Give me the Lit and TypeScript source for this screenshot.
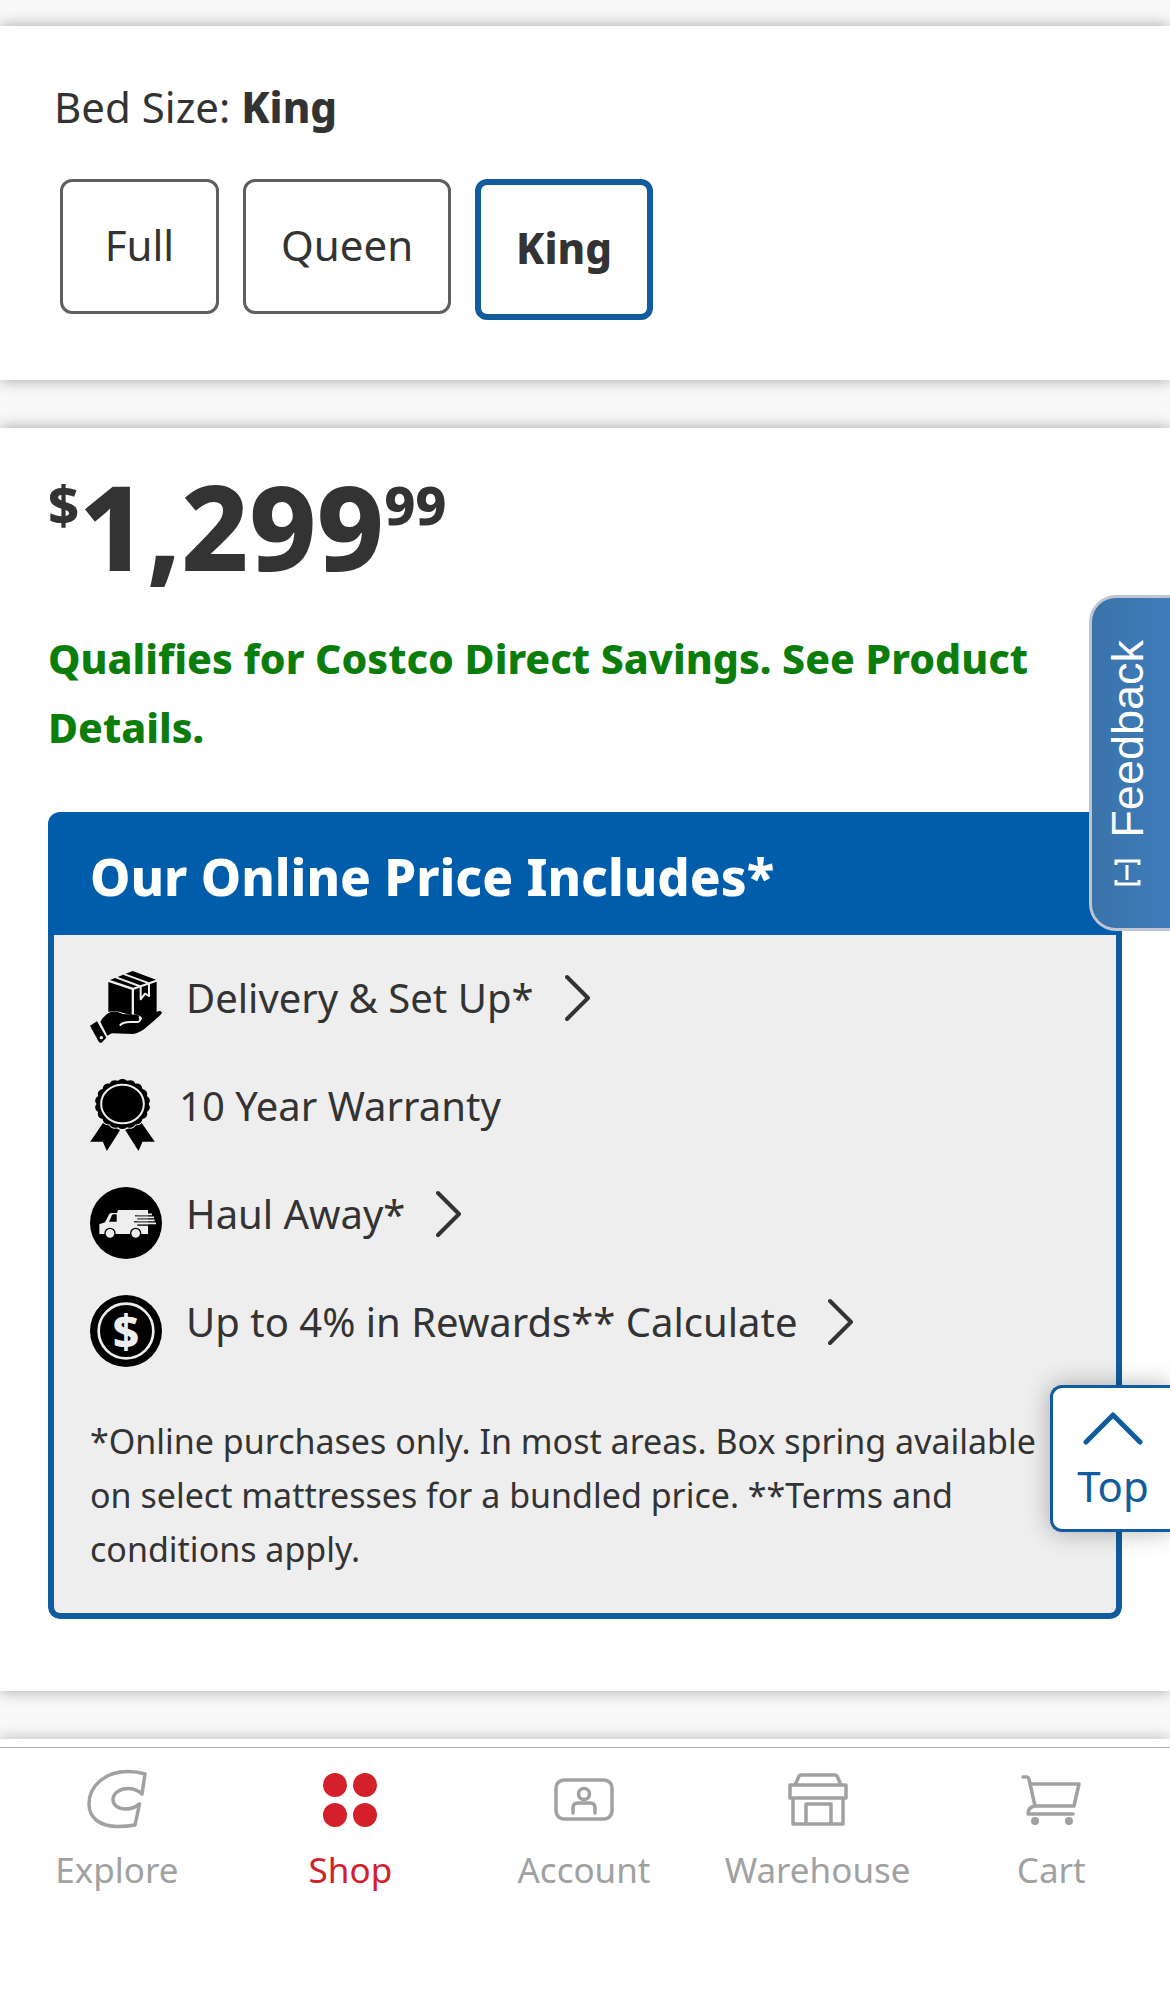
import { LitElement, html, svg, css } from "lit";
import { customElement, state } from "lit/decorators.js";
import { classMap } from "lit/directives/class-map.js";

const sizes = ["Full", "Queen", "King"];

/** Scalloped edge of the warranty rosette. */
function rosette(cx: number, cy: number, rx: number, ry: number, teeth: number): string {
  const at = (k: number, s: number) => {
    const a = (Math.PI * 2 * k) / teeth - Math.PI / 2;
    return `${(cx + Math.cos(a) * rx * s).toFixed(1)} ${(cy + Math.sin(a) * ry * s).toFixed(1)}`;
  };
  let d = `M${at(-0.5, 0.94)}`;
  for (let i = 0; i < teeth; i++) d += `Q${at(i, 1.08)} ${at(i + 0.5, 0.94)}`;
  return d + "Z";
}

const deliveryIcon = html`<svg class="perk-icon" viewBox="0 0 216 216" aria-hidden="true">
  <path d="M60 27 130 50 198 26 128 0Z M55 33 125 56V132L100 126Q84 118 55 122Z M132 56 200 32V124L158 146Q154 132 132 130Z" />
  <path class="cut" d="M78 19 148 45M104 10 172 35M152 47V85L165 68 177 75V39" />
  <path d="M31 152Q46 128 62 123Q80 118 98 129L138 131Q150 133 150 144V148L204 121Q214 118 216 125Q214 131 176 163Q152 186 130 189L66 187 52 194Z" />
  <path class="cut" d="M91 162Q100 153 120 153H143Q154 150 149 139" />
  <path d="M0 164 21 151 49 200 34 216 27 214Z" />
  <circle class="hole" cx="34" cy="200" r="5" />
</svg>`;

const warrantyIcon = html`<svg class="perk-icon slim" viewBox="0 0 194 216" aria-hidden="true">
  <path d="M40 130 90 153 50 216 38 188H0Z M153 130 105 153 145 216 157 188H194Z" />
  <path class="halo" d=${rosette(97, 75, 83, 75, 18)} />
  <ellipse class="ring thin" cx="97" cy="75" rx="64" ry="58" />
</svg>`;

const haulIcon = html`<svg class="perk-icon" viewBox="0 0 216 216" aria-hidden="true">
  <circle cx="108" cy="108" r="108" />
  <path class="light" d="M28 141V112L45 106 58 81Q60 78 66 78H81L84 69H174V141Z" />
  <path d="M57 104 66 84Q67 82 71 82H80V104Z" />
  <path class="gap" d="M135 87H184M142 96H190M132 105H192M142 114H196" />
  <path class="streak" d="M140 82H186M134 91H192M142 100H194M130 109H198" />
  <circle class="wheel" cx="60" cy="139" r="15" /><circle class="wheel" cx="137" cy="139" r="15" />
</svg>`;

const rewardIcon = html`<svg class="perk-icon" viewBox="0 0 216 216" aria-hidden="true">
  <circle cx="108" cy="108" r="108" />
  <circle class="ring" cx="108" cy="108" r="82" />
  <text class="coin" x="108" y="158" text-anchor="middle">$</text>
</svg>`;

const perks = [
  { label: "Delivery & Set Up*", icon: deliveryIcon, link: true },
  { label: "10 Year Warranty", icon: warrantyIcon, link: false },
  { label: "Haul Away*", icon: haulIcon, link: true },
  { label: "Up to 4% in Rewards** Calculate", icon: rewardIcon, link: true },
];

const tabs = [
  {
    label: "Explore",
    icon: svg`<path d="M58 5C52 3 46 2.500 41 2.500C18 2.500 2 17 2 35C2 49 13 57.500 31 57.500C38 57.500 43 57 48 56L52.500 35C48 38.500 44 40 39 40C31 40 26 36 26 30.500C26 24 33 19.500 41 19.500C47 19.500 51 21.500 55 25Z"/>`,
  },
  {
    label: "Shop",
    icon: svg`<g class="dots"><circle cx="15" cy="16" r="12"/><circle cx="45" cy="16" r="12"/><circle cx="15" cy="46" r="12"/><circle cx="45" cy="46" r="12"/></g>`,
  },
  {
    label: "Account",
    icon: svg`<rect x="2" y="11" width="56" height="39" rx="8"/><circle cx="30" cy="25" r="5.500"/><path d="M19 44V39Q19 34 24 34H36Q41 34 41 39V44"/>`,
  },
  {
    label: "Warehouse",
    icon: svg`<path d="M7 16 11 7Q12 6 13 6H47Q48 6 49 7L53 16M2 16H58V29H2ZM5 29V55H55V29M18 55V35H43V55"/>`,
  },
  {
    label: "Cart",
    icon: svg`<path d="M2 8H6Q7 8 8 10L14 37H53L58 15H9M14 37Q7 38 7 45H52"/><g class="dots"><circle cx="14" cy="52" r="4"/><circle cx="48" cy="52" r="4"/></g>`,
  },
];

@customElement("app-root")
export class AppRoot extends LitElement {
  @state() private size = "King";
  @state() private tab = "Shop";

  static styles = css`
    :host {
      display: block;
      font-family: "Noto Sans", "Open Sans", sans-serif;
      color: #333;
    }
    * { box-sizing: border-box; }
    button { font: inherit; color: inherit; background: none; cursor: pointer; }
    a { color: inherit; text-decoration: none; }
    h1, h2, p, ul { margin: 0; padding: 0; }
    .page {
      position: relative;
      display: flex;
      flex-direction: column;
      gap: 48px;
      min-height: 100vh;
      padding-top: 26px;
      overflow: hidden;
      background: #f9f9f9;
    }
    .panel {
      background: #fff;
      box-shadow: 0 0 15px rgba(0, 0, 0, 0.35);
    }
    .sizes { padding: 49px 54px 60px; }
    .size-label { font-size: 42px; line-height: 63px; }
    .size-label strong { font-weight: 800; }
    .options {
      display: flex;
      align-items: flex-start;
      gap: 24px;
      margin-top: 41px;
      padding-left: 6px;
    }
    .option {
      min-width: 159px;
      padding: 31px 35px 35px;
      border: 3px solid #5f5f5f;
      border-radius: 12px;
      font-size: 42px;
      line-height: 63px;
    }
    .option.chosen {
      border: 6px solid #115c9f;
      font-weight: 800;
    }
    .offer { padding: 38px 48px 72px; }
    .price {
      display: flex;
      align-items: flex-start;
      font-size: 117px;
      line-height: 120px;
      font-weight: 800;
    }
    .small {
      margin-top: 11px;
      font-size: 54px;
      line-height: 54px;
    }
    .savings {
      margin-top: 38px;
      font-size: 41px;
      line-height: 69px;
      font-weight: 800;
      color: #0b7d0b;
    }
    .includes {
      margin-top: 50px;
      border-radius: 12px;
      overflow: hidden;
    }
    .includes-title {
      padding: 28px 42px 23px;
      background: #005dab;
      color: #fff;
      font-size: 51px;
      line-height: 72px;
      font-weight: 800;
    }
    .includes-body {
      padding: 36px 36px 37px;
      border: 6px solid #115c9f;
      border-top: 0;
      border-radius: 0 0 12px 12px;
      background: #eee;
    }
    .perks {
      display: flex;
      flex-direction: column;
      gap: 36px;
      list-style: none;
    }
    .perk {
      display: flex;
      align-items: flex-start;
      gap: 24px;
      min-height: 72px;
      font-size: 40px;
      line-height: 54px;
    }
    .perk-link { display: flex; align-items: flex-start; gap: 31px; }
    .perk-icon { flex: none; width: 72px; height: 72px; fill: #000; }
    .perk-icon.slim { width: 65px; }
    .cut { fill: none; stroke: #eee; stroke-width: 6; stroke-linejoin: round; stroke-linecap: round; }
    .hole { fill: #eee; }
    .halo { stroke: #eee; stroke-width: 5; paint-order: stroke; }
    .ring { fill: none; stroke: #eee; stroke-width: 8; }
    .ring.thin { stroke-width: 6; }
    .light { fill: #eee; }
    .gap { fill: none; stroke: #000; stroke-width: 4; }
    .streak { fill: none; stroke: #eee; stroke-width: 5; }
    .wheel { fill: #eee; stroke: #000; stroke-width: 4; }
    .coin { fill: #eee; font-size: 138px; font-weight: 800; }
    .chevron {
      flex: none;
      width: 26px;
      height: 48px;
      margin-top: 3px;
      fill: none;
      stroke: #333;
      stroke-width: 4;
      stroke-linecap: round;
      stroke-linejoin: round;
    }
    .terms {
      margin-top: 47px;
      font-size: 34px;
      line-height: 54px;
    }
    .end { height: 8px; }
    .bottom { display: flex; flex-direction: column; flex: 1; }
    .nav {
      position: relative;
      flex: 1;
      display: grid;
      grid-template-columns: repeat(5, 1fr);
      align-items: start;
      padding: 21px 2px 96px 0;
      border-top: 1px solid #aeaeae;
      background: #fff;
    }
    .tab {
      display: flex;
      flex-direction: column;
      align-items: center;
      gap: 14px;
      color: #a1a1a1;
      font-size: 35px;
      line-height: 54px;
    }
    .tab.current { color: #d3202a; }
    .tab-icon {
      width: 60px;
      height: 60px;
      fill: none;
      stroke: currentColor;
      stroke-width: 3.5;
      stroke-linecap: round;
      stroke-linejoin: round;
    }
    .dots { fill: currentColor; stroke: none; }
    .feedback {
      position: absolute;
      top: 595px;
      right: 0;
      display: flex;
      flex-direction: column;
      align-items: center;
      gap: 21px;
      width: 81px;
      padding: 42px 8px 42px 0;
      border: 3px solid #bfc5d2;
      border-right: 0;
      border-radius: 27px 0 0 27px;
      background: linear-gradient(90deg, #3a73a9, #3e7cbb);
      color: #fff;
      font-family: "Liberation Sans", Arial, sans-serif;
      font-size: 45px;
      line-height: 51px;
    }
    .feedback-text { writing-mode: vertical-rl; transform: rotate(180deg); }
    .bracket { width: 27px; height: 27px; fill: none; stroke: #fff; stroke-width: 3; }
    .top {
      position: absolute;
      top: 1385px;
      right: 0;
      display: flex;
      flex-direction: column;
      align-items: center;
      gap: 15px;
      width: 120px;
      padding: 24px 0 18px 3px;
      border: 3px solid #115c9f;
      border-right: 0;
      border-radius: 12px 0 0 12px;
      background: #fff;
      box-shadow: 0 0 24px rgba(0, 0, 0, 0.3);
      color: #115c9f;
      font-size: 42px;
      line-height: 51px;
    }
    .top-icon {
      width: 60px;
      height: 33px;
      fill: none;
      stroke: currentColor;
      stroke-width: 5;
      stroke-linecap: round;
      stroke-linejoin: round;
    }
  `;

  private perkText(label: string, link: boolean) {
    return link
      ? html`<a class="perk-link" href="#details"
          >${label}<svg class="chevron" viewBox="0 0 26 48" aria-hidden="true"><path d="M2 3 23 24 2 45" /></svg
        ></a>`
      : html`<span>${label}</span>`;
  }

  render() {
    return html`<main class="page">
      <section class="panel sizes">
        <p class="size-label">Bed Size: <strong>${this.size}</strong></p>
        <div class="options" role="group" aria-label="Bed Size">
          ${sizes.map(
            (s) => html`<button
              type="button"
              class=${classMap({ option: true, chosen: s === this.size })}
              aria-pressed=${s === this.size ? "true" : "false"}
              @click=${() => (this.size = s)}
            >${s}</button>`
          )}
        </div>
      </section>

      <section class="panel offer">
        <div class="price"><span class="small">$</span><span>1,299</span><span class="small">99</span></div>
        <p class="savings">Qualifies for Costco Direct Savings. See Product Details.</p>
        <div class="includes">
          <h2 class="includes-title">Our Online Price Includes*</h2>
          <div class="includes-body">
            <ul class="perks">
              ${perks.map((p) => html`<li class="perk">${p.icon}${this.perkText(p.label, p.link)}</li>`)}
            </ul>
            <p class="terms">
              *Online purchases only. In most areas. Box spring available on select mattresses for a bundled price.
              **Terms and conditions apply.
            </p>
          </div>
        </div>
      </section>

      <div class="bottom">
        <div class="panel end"></div>
        <nav class="nav">
          ${tabs.map(
            (t) => html`<a
              href="#${t.label.toLowerCase()}"
              class=${classMap({ tab: true, current: t.label === this.tab })}
              @click=${() => (this.tab = t.label)}
              ><svg class="tab-icon" viewBox="0 0 60 60" aria-hidden="true">${t.icon}</svg>${t.label}</a
            >`
          )}
        </nav>
      </div>

      <button type="button" class="feedback">
        <span class="feedback-text">Feedback</span>
        <svg class="bracket" viewBox="0 0 27 27" aria-hidden="true">
          <path d="M2 6V2H25V6M2 21V25H25V21M13 6V21" />
        </svg>
      </button>
      <button type="button" class="top" @click=${() => window.scrollTo(0, 0)}>
        <svg class="top-icon" viewBox="0 0 60 33" aria-hidden="true"><path d="M3 30 30 3 57 30" /></svg>
        <span>Top</span>
      </button>
    </main>`;
  }
}
